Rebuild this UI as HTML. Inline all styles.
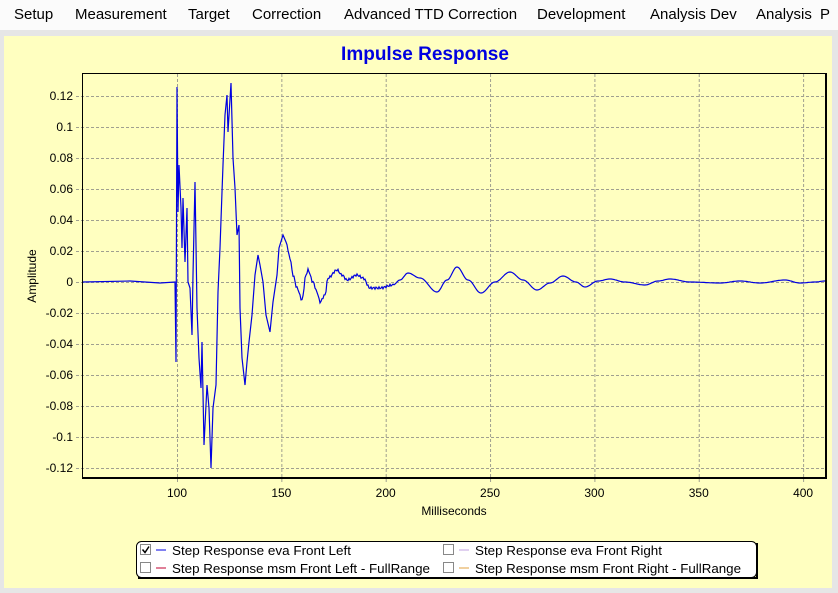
<!DOCTYPE html>
<html><head><meta charset="utf-8"><style>
body{margin:0;width:838px;height:593px;overflow:hidden;background:#e6e6e6;font-family:"Liberation Sans",sans-serif;position:relative}
#menu{position:absolute;left:0;top:0;width:838px;height:30px;background:#fbfbfb;font-size:15px;color:#000}
#menu span{position:absolute;top:6px}
#panel{position:absolute;left:4px;top:36px;width:828px;height:552px;background:#ffffc0}
</style></head><body>
<div id="menu">
<span style="left:14px">Setup</span><span style="left:75px">Measurement</span><span style="left:188px">Target</span><span style="left:252px">Correction</span><span style="left:344px">Advanced TTD Correction</span><span style="left:537px">Development</span><span style="left:650px">Analysis Dev</span><span style="left:756px">Analysis</span><span style="left:820px">P</span>
</div>
<div id="panel"></div>
<svg id="s" width="838" height="593" style="position:absolute;left:0;top:0" font-family="Liberation Sans, sans-serif">
<text x="425" y="60" text-anchor="middle" font-size="19" font-weight="bold" fill="#0000e0">Impulse Response</text>
<g id="grid" stroke="#a0a090" stroke-dasharray="3,2" stroke-width="1"></g>
<g id="yl" font-size="12" text-anchor="end" fill="#000"></g>
<g id="xl" font-size="12" text-anchor="middle" fill="#000"></g>
<text x="36" y="276" font-size="12" text-anchor="middle" transform="rotate(-90 36 276)">Amplitude</text>
<text x="454" y="515" font-size="12" text-anchor="middle">Milliseconds</text>
<path id="w" fill="none" stroke="#0000e0" stroke-width="1.2"/>
<path d="M82.5 73.5H825.5V477.5H82.5Z" fill="none" stroke="#000" stroke-width="1"/>
<path d="M82 478H826V73" fill="none" stroke="#000" stroke-width="2"/>
<rect x="136.5" y="541.5" width="620" height="36" rx="5" fill="#fff" stroke="#000"/>
<path d="M138 578H757V543" fill="none" stroke="#000" stroke-width="2"/>
<g font-size="13" fill="#000">
<rect x="140.5" y="544.5" width="10" height="10" fill="#fff" stroke="#888"/><path d="M142.5 549.5l2.5 3 4-6" stroke="#000" stroke-width="1.5" fill="none"/>
<line x1="156" y1="550" x2="166" y2="550" stroke="#0000e0"/><text x="172" y="555" textLength="179" lengthAdjust="spacingAndGlyphs">Step Response eva Front Left</text>
<rect x="140.5" y="562.5" width="10" height="10" fill="#fff" stroke="#888"/>
<line x1="156" y1="568" x2="166" y2="568" stroke="#c00030"/><text x="172" y="573" textLength="258" lengthAdjust="spacingAndGlyphs">Step Response msm Front Left - FullRange</text>
<rect x="443.5" y="544.5" width="10" height="10" fill="#fff" stroke="#888"/>
<line x1="459" y1="550" x2="469" y2="550" stroke="#c0a0e0"/><text x="475" y="555" textLength="187" lengthAdjust="spacingAndGlyphs">Step Response eva Front Right</text>
<rect x="443.5" y="562.5" width="10" height="10" fill="#fff" stroke="#888"/>
<line x1="459" y1="568" x2="469" y2="568" stroke="#e0a040"/><text x="475" y="573" textLength="266" lengthAdjust="spacingAndGlyphs">Step Response msm Front Right - FullRange</text>
</g>
</svg>
<script>
var ns="http://www.w3.org/2000/svg",g=document.getElementById('grid'),yl=document.getElementById('yl'),xl=document.getElementById('xl');
function el(p,t,a,txt){var e=document.createElementNS(ns,t);for(var k in a)e.setAttribute(k,a[k]);if(txt)e.textContent=txt;p.appendChild(e);}
var labs=["0.12","0.1","0.08","0.06","0.04","0.02","0","-0.02","-0.04","-0.06","-0.08","-0.1","-0.12"];
for(var i=0;i<13;i++){var y=96+i*31;el(g,'line',{x1:76,x2:825,y1:y+.5,y2:y+.5});el(yl,'text',{x:73,y:y+4},labs[i]);}
for(var j=0;j<7;j++){var x=177+j*104.35;el(g,'line',{x1:x+.5,x2:x+.5,y1:74,y2:484});el(xl,'text',{x:x,y:497},String(100+50*j));}
var p=[[83,282],[130,281],[160,283],[175,282],[176,362],[177,87],[178,212],[179,165],[181,208],[182,248],[183,198],[185,262],[187,208],[188,282],[190,288],[192,335],[193,275],[195,182],[197,308],[199,358],[201,388],[202,342],[204,445],[207,385],[209,408],[211,468],[213,408],[216,385],[218,292],[220,248],[222,192],[223,165],[225,115],[227,95],[228,132],[231,83],[233,158],[235,188],[237,235],[239,225],[240,308],[242,358],[245,385],[247,362],[249,342],[252,315],[255,275],[258,255],[260,265],[263,282],[266,315],[270,332],[273,302],[277,275],[279,248],[283,235],[286,242],[290,258],[293,275],[297,288],[302,300],[306,275],[308,270],[313,282],[317,292],[320,302],[325,295],[328,278],[337,270],[342,275],[347,280],[357,275],[363,278],[370,288],[380,288],[393,285],[400,280],[408,273],[420,278],[437,292],[447,280],[457,267],[468,280],[481,293],[495,282],[510,272],[523,280],[537,290],[550,283],[563,276],[576,282],[585,287],[598,281],[610,279],[625,282],[645,285],[658,281],[670,279],[690,282],[720,283],[740,281],[760,283],[785,280],[800,283],[815,282],[825,281]];
var out=[];
for(var k=0;k<p.length;k++){
  var a=p[k];
  if(k>0 && a[0]>=290){
    var b=p[k-1];
    var d=b[0]<290?0:1;
    // find local extrema interpolation: cosine
    for(var x2=b[0]+1;x2<=a[0];x2++){
      var t=(x2-b[0])/(a[0]-b[0]);var s=(1-Math.cos(Math.PI*t))/2;
      var yy=b[1]+(a[1]-b[1])*s;
      if(a[0]<400) yy+=Math.sin(x2*2.3)*1.2;
      out.push(x2+' '+yy.toFixed(1));
    }
  } else out.push(a[0]+' '+a[1]);
}
document.getElementById('w').setAttribute('d','M'+out.join('L'));
</script>
</body></html>
